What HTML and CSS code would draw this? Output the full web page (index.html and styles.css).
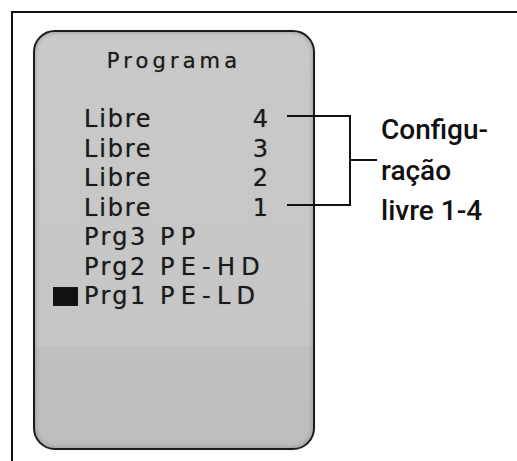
FILE: index.html
```html
<!DOCTYPE html>
<html lang="pt">
<head>
    <meta charset="UTF-8">
    <meta name="viewport" content="width=device-width, initial-scale=1.0">
    <title>Programa</title>
    <link rel="stylesheet" href="styles.css">
</head>
<body>

    <div class="frame">
        <!-- display panel -->
        <div class="panel">
            <h1 class="title">Programa</h1>
            <ul class="menu">
                <li class="item"><span class="mark"></span><span class="name">Libre</span><span class="num">4</span></li>
                <li class="item"><span class="mark"></span><span class="name">Libre</span><span class="num">3</span></li>
                <li class="item"><span class="mark"></span><span class="name">Libre</span><span class="num">2</span></li>
                <li class="item"><span class="mark"></span><span class="name">Libre</span><span class="num">1</span></li>
                <li class="item"><span class="mark"></span><span class="name prg">Prg3</span><span class="val">PP</span></li>
                <li class="item"><span class="mark"></span><span class="name prg">Prg2</span><span class="val">PE-HD</span></li>
                <li class="item current"><span class="mark"></span><span class="name prg">Prg1</span><span class="val">PE-LD</span></li>
            </ul>
        </div>

        <p class="note">Configu-<br>ração<br>livre 1-4</p>

        <!-- bracket from the free slots to the note -->
        <svg class="bracket" width="92" height="94" viewBox="0 0 92 94">
            <path d="M1 2 H64 V91 H1 M64 46 H91" fill="none" stroke="#111" stroke-width="2"/>
        </svg>
    </div>

</body>
</html>
```

FILE: styles.css
```css
html, body {
    overflow: hidden;
}

body {
    background-color: #fff;
    color: #111;
    margin: 0;
    padding: 0;
}

/* Outer box, runs off the right and bottom */
.frame {
    position: relative;
    display: flex;
    align-items: flex-start;
    margin: 11px 0 0 11px;
    width: 520px;
    height: 470px;
    border-top: 2px solid #111;
    border-left: 2px solid #111;
}

/* Grey display */
.panel {
    box-sizing: border-box;
    width: 282px;
    height: 420px;
    margin: 17px 0 0 20px;
    padding-top: 18px;
    border: 2px solid #1c1c1c;
    border-radius: 22px;
    background: linear-gradient(#c9c9c9 0, #c6c6c6 75%, #bfbfbf 76%, #bdbdbd 100%);
    box-shadow: inset 0 0 5px rgba(0, 0, 0, 0.25), 0 0 3px rgba(0, 0, 0, 0.08);
    font-family: "DejaVu Sans", sans-serif;
    color: #1a1a1a;
    text-shadow: 0 0 1px rgba(0, 0, 0, 0.45);
}

.title {
    margin: 0 0 33px 0;
    font-size: 21px;
    font-weight: normal;
    line-height: 22px;
    letter-spacing: 4.1px;
    text-align: center;
}

.menu {
    list-style: none;
    margin: 0;
    padding: 0 0 0 18px;
}

.item {
    display: flex;
    width: 215px;
    font-size: 24px;
    line-height: 29.5px;
}

.mark {
    flex: none;
    width: 25px;
    height: 19px;
    margin: 5px 6px 0 0;
}

.current .mark {
    background-color: #111;
    box-shadow: inset 0 0 1px #555;
}

.name {
    width: 76px;
    letter-spacing: 1.8px;
}

.name.prg {
    letter-spacing: 2.4px;
}

.num {
    margin-left: auto;
}

.val {
    letter-spacing: 6.2px;
}

/* Side label */
.note {
    margin: 97px 0 0 66px;
    font-family: Roboto, "Liberation Sans", sans-serif;
    font-weight: 500;
    font-size: 28px;
    line-height: 40.5px;
    color: #111;
}

.bracket {
    position: absolute;
    left: 273px;
    top: 101px;
}
```
